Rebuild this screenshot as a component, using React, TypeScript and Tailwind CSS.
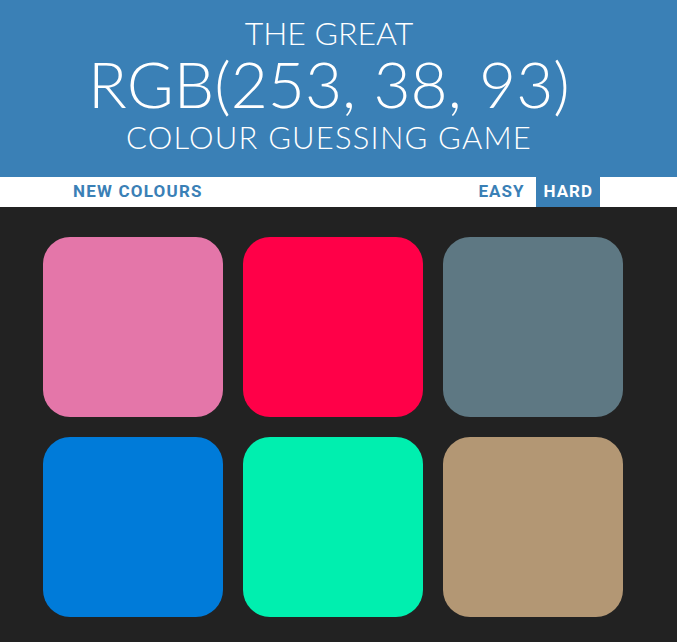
import React from "react";

const colors = ["#e476a9", "#ff0048", "#5e7883", "#007bd9", "#00efaf", "#b39774"];

export default function App() {
  return (
    <div className="w-[677px] h-[642px] bg-[#222222] overflow-hidden" style={{ fontFamily: "Lato, 'Open Sans', sans-serif" }}>
      <div className="h-[177px] bg-[#3a80b6] text-white flex flex-col items-center pr-[19px] pt-[14px] font-light">
        <div className="text-[32px] leading-[38px]">THE GREAT</div>
        <div className="text-[64px] leading-[63px]">RGB(253, 38, 93)</div>
        <div className="text-[31px] leading-[44px] tracking-[1.2px]">COLOUR GUESSING GAME</div>
      </div>
      <div className="h-[30px] bg-white flex items-stretch pl-[57px] pr-[77px]" style={{ fontFamily: "Roboto, sans-serif" }}>
        <button className="px-4 text-[17px] font-bold tracking-[1.2px] text-[#3a80b6]">NEW COLOURS</button>
        <div className="flex-1" />
        <button className="pl-[6px] pr-[12px] text-[17px] font-bold tracking-[1px] text-[#3a80b6]">EASY</button>
        <button className="px-[7px] text-[17px] font-bold tracking-[1px] text-white bg-[#3a80b6]">HARD</button>
      </div>
      <div className="pl-[43px] pt-[30px] grid grid-cols-[180px_180px_180px] gap-5">
        {colors.map((c) => (
          <div key={c} className="w-[180px] h-[180px] rounded-[27px]" style={{ backgroundColor: c }} />
        ))}
      </div>
    </div>
  );
}
